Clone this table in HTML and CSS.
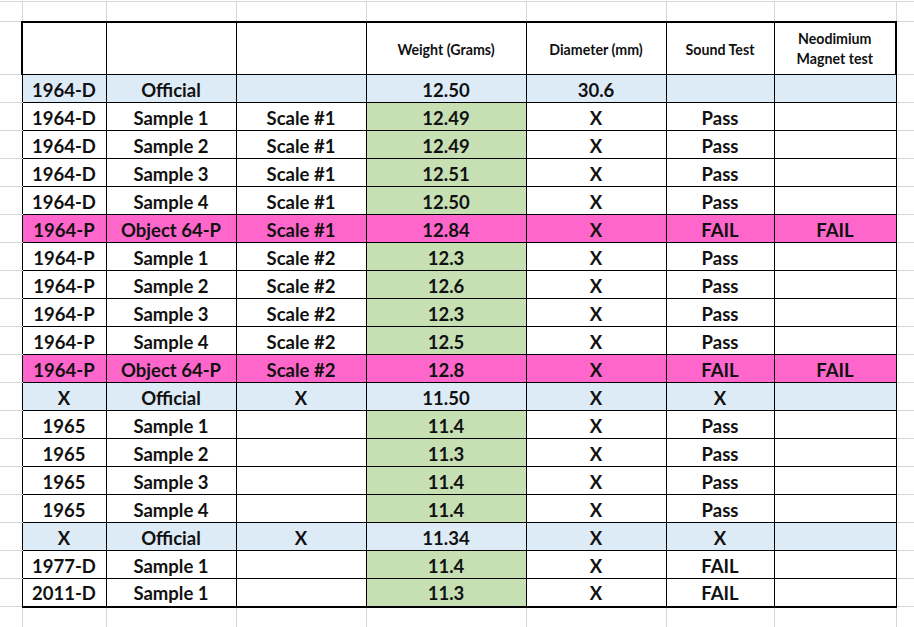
FILE: index.html
```html
<!DOCTYPE html>
<html>
<head>
<meta charset="utf-8">
<link rel="stylesheet" href="styles.css">
</head>
<body>
<table class="sheet">
  <colgroup>
    <col class="c-a"><col class="c-b"><col class="c-c"><col class="c-d"><col class="c-e"><col class="c-f"><col class="c-g"><col class="c-h"><col class="c-i">
  </colgroup>
  <tr class="r-top">
    <td class="gt gl"></td><td class="gt"></td><td class="gt"></td><td class="gt"></td><td class="gt"></td><td class="gt"></td><td class="gt"></td><td class="gt"></td><td class="gt gr"></td>
  </tr>
  <tr class="r-head">
    <td class="side"></td>
    <th class="first"></th><th></th><th></th>
    <th>Weight (Grams)</th><th>Diameter (mm)</th><th>Sound Test</th>
    <th class="last two">Neodimium<br>Magnet test</th>
    <td class="side"></td>
  </tr>
  <tr class="row blue">
    <td class="side"></td><td class="first">1964-D</td><td>Official</td><td></td><td>12.50</td><td>30.6</td><td></td><td class="last"></td><td class="side"></td>
  </tr>
  <tr class="row">
    <td class="side"></td><td class="first">1964-D</td><td>Sample 1</td><td>Scale #1</td><td class="green">12.49</td><td>X</td><td>Pass</td><td class="last"></td><td class="side"></td>
  </tr>
  <tr class="row">
    <td class="side"></td><td class="first">1964-D</td><td>Sample 2</td><td>Scale #1</td><td class="green">12.49</td><td>X</td><td>Pass</td><td class="last"></td><td class="side"></td>
  </tr>
  <tr class="row">
    <td class="side"></td><td class="first">1964-D</td><td>Sample 3</td><td>Scale #1</td><td class="green">12.51</td><td>X</td><td>Pass</td><td class="last"></td><td class="side"></td>
  </tr>
  <tr class="row">
    <td class="side"></td><td class="first">1964-D</td><td>Sample 4</td><td>Scale #1</td><td class="green">12.50</td><td>X</td><td>Pass</td><td class="last"></td><td class="side"></td>
  </tr>
  <tr class="row pink">
    <td class="side"></td><td class="first">1964-P</td><td>Object 64-P</td><td>Scale #1</td><td>12.84</td><td>X</td><td>FAIL</td><td class="last">FAIL</td><td class="side"></td>
  </tr>
  <tr class="row">
    <td class="side"></td><td class="first">1964-P</td><td>Sample 1</td><td>Scale #2</td><td class="green">12.3</td><td>X</td><td>Pass</td><td class="last"></td><td class="side"></td>
  </tr>
  <tr class="row">
    <td class="side"></td><td class="first">1964-P</td><td>Sample 2</td><td>Scale #2</td><td class="green">12.6</td><td>X</td><td>Pass</td><td class="last"></td><td class="side"></td>
  </tr>
  <tr class="row">
    <td class="side"></td><td class="first">1964-P</td><td>Sample 3</td><td>Scale #2</td><td class="green">12.3</td><td>X</td><td>Pass</td><td class="last"></td><td class="side"></td>
  </tr>
  <tr class="row">
    <td class="side"></td><td class="first">1964-P</td><td>Sample 4</td><td>Scale #2</td><td class="green">12.5</td><td>X</td><td>Pass</td><td class="last"></td><td class="side"></td>
  </tr>
  <tr class="row pink">
    <td class="side"></td><td class="first">1964-P</td><td>Object 64-P</td><td>Scale #2</td><td>12.8</td><td>X</td><td>FAIL</td><td class="last">FAIL</td><td class="side"></td>
  </tr>
  <tr class="row blue">
    <td class="side"></td><td class="first">X</td><td>Official</td><td>X</td><td>11.50</td><td>X</td><td>X</td><td class="last"></td><td class="side"></td>
  </tr>
  <tr class="row">
    <td class="side"></td><td class="first">1965</td><td>Sample 1</td><td></td><td class="green">11.4</td><td>X</td><td>Pass</td><td class="last"></td><td class="side"></td>
  </tr>
  <tr class="row">
    <td class="side"></td><td class="first">1965</td><td>Sample 2</td><td></td><td class="green">11.3</td><td>X</td><td>Pass</td><td class="last"></td><td class="side"></td>
  </tr>
  <tr class="row">
    <td class="side"></td><td class="first">1965</td><td>Sample 3</td><td></td><td class="green">11.4</td><td>X</td><td>Pass</td><td class="last"></td><td class="side"></td>
  </tr>
  <tr class="row">
    <td class="side"></td><td class="first">1965</td><td>Sample 4</td><td></td><td class="green">11.4</td><td>X</td><td>Pass</td><td class="last"></td><td class="side"></td>
  </tr>
  <tr class="row blue">
    <td class="side"></td><td class="first">X</td><td>Official</td><td>X</td><td>11.34</td><td>X</td><td>X</td><td class="last"></td><td class="side"></td>
  </tr>
  <tr class="row">
    <td class="side"></td><td class="first">1977-D</td><td>Sample 1</td><td></td><td class="green">11.4</td><td>X</td><td>FAIL</td><td class="last"></td><td class="side"></td>
  </tr>
  <tr class="row lastrow">
    <td class="side"></td><td class="first">2011-D</td><td>Sample 1</td><td></td><td class="green">11.3</td><td>X</td><td>FAIL</td><td class="last"></td><td class="side"></td>
  </tr>
  <tr class="r-bottom">
    <td class="gb"></td><td class="gb"></td><td class="gb"></td><td class="gb"></td><td class="gb"></td><td class="gb"></td><td class="gb"></td><td class="gb"></td><td class="gb gr"></td>
  </tr>
</table>
</body>
</html>
```

FILE: styles.css
```css
html, body {
  margin: 0;
  padding: 0;
  background: #ffffff;
  overflow: hidden;
}

body {
  width: 914px;
  height: 627px;
  padding-top: 1px;
  box-sizing: border-box;
  font-family: Lato, "Liberation Sans", sans-serif;
  color: #111111;
}

.sheet {
  border-collapse: collapse;
  table-layout: fixed;
  width: 914px;
}

.c-a { width: 22px; }
.c-b { width: 84px; }
.c-c { width: 130px; }
.c-d { width: 130px; }
.c-e { width: 160px; }
.c-f { width: 140px; }
.c-g { width: 108px; }
.c-h { width: 122px; }
.c-i { width: 18px; }

.sheet td, .sheet th {
  padding: 0;
  text-align: center;
  vertical-align: middle;
  white-space: nowrap;
}

/* spreadsheet grid outside the table */
.r-top { height: 20px; }
.gt {
  border-top: 1px solid #d6d6d6;
  border-right: 1px solid #d6d6d6;
}
.gl { border-bottom: 1px solid #d6d6d6; }
.gr { border-right: none; border-bottom: 1px solid #d6d6d6; }

.r-bottom { height: 22px; }
.gb {
  border-right: 1px solid #d6d6d6;
}
.r-bottom .gr { border-bottom: none; }

.side {
  border-bottom: 1px solid #d6d6d6;
}

/* the bordered table */
.r-head { height: 53px; }
.r-head th {
  border: 1px solid #000;
  border-top: 2px solid #000;
  font-size: 14.2px;
  font-weight: 700;
  background: #ffffff;
  padding-top: 2px;
}
.r-head th.two { line-height: 20px; }

.row { height: 28px; }
.row td:not(.side) {
  border: 1px solid #000;
  font-size: 18.5px;
  font-weight: 700;
  background: #ffffff;
  padding-top: 2px;
}

.sheet .first { border-left: 2px solid #000; }
.sheet .last { border-right: 2px solid #000; }
.lastrow td:not(.side) { border-bottom: 2px solid #000; }

.row.blue td:not(.side) { background: #ddebf7; }
.row.pink td:not(.side) { background: #ff66cc; }
.row td.green { background: #c6e0b4; }
```
